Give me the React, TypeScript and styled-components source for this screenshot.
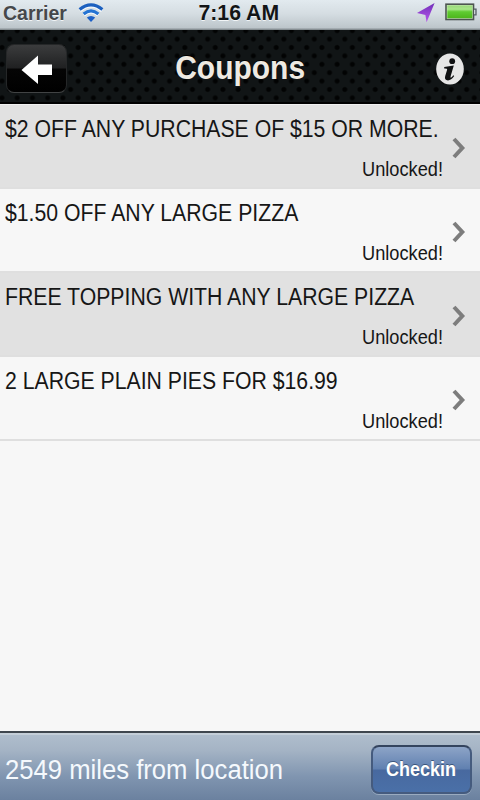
import React from "react";
import styled, { createGlobalStyle } from "styled-components";

const Global = createGlobalStyle`
  * { box-sizing: border-box; }
  body { margin: 0; background: #f7f7f7; font-family: "Liberation Sans", Arial, sans-serif; }
`;

const Screen = styled.div`
  width: 480px;
  height: 800px;
  display: flex;
  flex-direction: column;
  overflow: hidden;
  background: #f7f7f7;
`;

/* Single line of condensed text. */
const Label = styled.span<{ $size: number; $scale: number; $origin?: string }>`
  display: block;
  white-space: nowrap;
  font-size: ${(p) => p.$size}px;
  line-height: 28px;
  transform: scaleX(${(p) => p.$scale});
  transform-origin: ${(p) => p.$origin ?? "left"} center;
`;

const Status = styled(Label)`
  align-self: flex-end;
`;

const StatusBar = styled.header`
  height: 30px;
  flex: none;
  display: grid;
  grid-template-columns: 1fr auto 1fr;
  align-items: start;
  background: linear-gradient(#e2eaef, #d5dde2 45%, #bdc6cb 92%, #788084);
  font-weight: bold;
`;

const Carrier = styled.div`
  display: flex;
  margin-top: -1px;
  padding-left: 3px;
  color: #46484b;
  text-shadow: 0 1px 0 #f1f5f7;
  svg { margin: 4px 0 0 8px; }
`;

const Clock = styled.div`
  color: #121416;
  text-shadow: 0 1px 0 #f1f5f7;
  margin: -1px 3px 0 0;
`;

const Indicators = styled.div`
  display: flex;
  justify-content: flex-end;
  padding: 2px 2px 0 0;
  gap: 8px;
`;

const NavBar = styled.nav`
  height: 74px;
  flex: none;
  display: grid;
  grid-template-columns: 1fr auto 1fr;
  align-items: center;
  padding: 5px 16px 0 6px;
  border-bottom: 2px solid #000;
  background:
    radial-gradient(circle at 50% 50%, #020303 1.8px, transparent 3.1px) 2px 0.7px / 15.24px 16.8px,
    radial-gradient(circle at 50% 50%, #020303 1.8px, transparent 3.1px) 9.6px 9.1px / 15.24px 16.8px,
    #111516;
  > svg { justify-self: end; }
`;

const BackButton = styled.button`
  width: 61px;
  height: 49px;
  padding: 0;
  border: 1px solid #252728;
  border-bottom-color: #414344;
  border-radius: 8px;
  display: grid;
  place-items: center;
  background: linear-gradient(#3b3c3d, #202122 48%, #050505 52%, #000);
`;

const Title = styled.h1`
  margin: 0 -10px 1px 0;
  font-size: inherit;
  color: #eeeae2;
  text-shadow: 0 -1px 0 #000;
`;

const List = styled.ul`
  flex: 1;
  list-style: none;
  margin: 0;
  padding: 0;
  border-top: 1px solid #f0f0f0;
`;

const Row = styled.li<{ $shaded: boolean }>`
  height: 84px;
  display: grid;
  grid-template-columns: 443px 1fr;
  color: #161616;
  background: ${(p) => (p.$shaded ? "#e1e1e1" : "#f7f7f7")};
  border-bottom: 2px solid #dfdfdf;
`;

const Offer = styled.div`
  padding: 10px 0 0 4.6px;
  display: flex;
  flex-direction: column;
  gap: 12px;
`;

const ChevronCell = styled.div`
  padding: 32px 0 0 9px;
  line-height: 0;
`;

const Footer = styled.footer`
  height: 69px;
  flex: none;
  display: flex;
  align-items: center;
  justify-content: space-between;
  padding: 6px 8px 0 4.6px;
  color: #f5f9fd;
  border-top: 2px solid #3f464e;
  box-shadow: inset 0 2px 0 #c4ced8;
  background: linear-gradient(#b0becd, #a5b4c5 25%, #8095b0 65%, #6b819f);
`;

const CheckinButton = styled.button`
  width: 101px;
  height: 49px;
  margin-bottom: 1px;
  padding: 0 1px 0 0;
  display: grid;
  place-items: center;
  font-family: inherit;
  font-weight: bold;
  color: #fff;
  text-shadow: 0 -1px 0 #3c567c;
  border: 2px solid #455b7e;
  border-top-color: #34445e;
  border-radius: 8px;
  box-shadow: 0 1px 0 #9aabc0;
  background: linear-gradient(#8da4c7, #6080b0 49%, #48699f 51%, #4a70a8);
`;

const Wifi = () => (
  <svg width="26" height="20" viewBox="0 0 26 20" fill="none" strokeWidth="3.1">
    <path stroke="#fafdff" d="M2 7.7Q13-1.7 24 7.7M5.8 12Q13 5.7 20.2 12" />
    <path stroke="#1c60bf" d="M1.6 6.5Q13-2.9 24.4 6.5" />
    <path stroke="#2473d3" d="M5.6 11Q13 4.6 20.4 11" />
    <path fill="#1c60c7" d="M8.8 14.6Q13 11.3 17.2 14.6L13 19Z" />
  </svg>
);

const LocationArrow = () => (
  <svg width="20" height="21" viewBox="0 0 20 21">
    <defs>
      <linearGradient id="arrow" x2="0" y2="1">
        <stop stopColor="#7030b8" />
        <stop offset="1" stopColor="#b956ed" />
      </linearGradient>
    </defs>
    <path d="M17.6 1L0 11L8.4 13L9.6 20.3Z" fill="url(#arrow)" />
  </svg>
);

const Battery = () => (
  <svg width="33" height="19" viewBox="0 0 33 19">
    <defs>
      <linearGradient id="charge" x2="0" y2="1">
        <stop stopColor="#98d879" />
        <stop offset=".3" stopColor="#a8e68a" />
        <stop offset=".5" stopColor="#60cc32" />
        <stop offset="1" stopColor="#4db61c" />
      </linearGradient>
    </defs>
    <rect x="1" y="2.2" width="27.5" height="15.3" fill="#d7edca" stroke="#4c5550" strokeWidth="1.6" />
    <rect x="2.3" y="3.4" width="25" height="12.8" fill="url(#charge)" />
    <path d="M29 7.2h2v5.6h-2" fill="#cbd2d5" stroke="#555e65" strokeWidth="1.3" />
  </svg>
);

const BackArrow = () => (
  <svg width="32" height="30" viewBox="0 0 32 30">
    <path d="M0.5 16L17 1.5V10.5H31V21H17V30Z" fill="#fff" />
  </svg>
);

const Info = () => (
  <svg width="28" height="32" viewBox="0 0 28 32">
    <ellipse cx="14" cy="16" rx="13.8" ry="15.6" fill="#e6e6e6" />
    <ellipse cx="16.2" cy="8.2" rx="2.9" ry="2.9" fill="#101112" />
    <path d="M8.2 13.9L17.8 12.4L14.7 23Q14.2 25.2 15.2 24.6Q16.1 24 17.2 22.3L18.2 23Q15.2 27.4 12 27.4Q8.1 27.4 9.2 23L11.2 16.6Q11.5 15.2 8.2 15.4Z" fill="#101112" />
  </svg>
);

const Chevron = () => (
  <svg width="14" height="22" viewBox="0 0 14 22">
    <path d="M2 2L10.3 11L2 20" fill="none" stroke="#7d7d7d" strokeWidth="4" />
  </svg>
);

const coupons = [
  "$2 OFF ANY PURCHASE OF $15 OR MORE.",
  "$1.50 OFF ANY LARGE PIZZA",
  "FREE TOPPING WITH ANY LARGE PIZZA",
  "2 LARGE PLAIN PIES FOR $16.99",
];

export default function App() {
  return (
    <Screen>
      <Global />
      <StatusBar>
        <Carrier>
          <Label $size={20.5} $scale={0.95}>Carrier</Label>
          <Wifi />
        </Carrier>
        <Clock><Label $size={22} $scale={0.965} $origin="center">7:16 AM</Label></Clock>
        <Indicators><LocationArrow /><Battery /></Indicators>
      </StatusBar>
      <NavBar>
        <BackButton aria-label="Back"><BackArrow /></BackButton>
        <Title><Label $size={33.3} $scale={0.9} $origin="center">Coupons</Label></Title>
        <Info />
      </NavBar>
      <List>
        {coupons.map((text, i) => (
          <Row key={text} $shaded={i % 2 === 0}>
            <Offer>
              <Label $size={23.3} $scale={0.911}>{text}</Label>
              <Status $size={20} $scale={0.91} $origin="right">Unlocked!</Status>
            </Offer>
            <ChevronCell><Chevron /></ChevronCell>
          </Row>
        ))}
      </List>
      <Footer>
        <Label $size={27} $scale={0.95}>2549 miles from location</Label>
        <CheckinButton><Label $size={20} $scale={0.9} $origin="center">Checkin</Label></CheckinButton>
      </Footer>
    </Screen>
  );
}
